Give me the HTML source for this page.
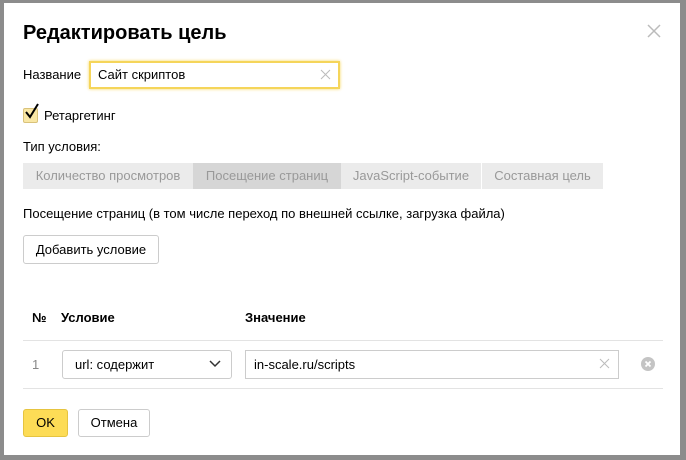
<!DOCTYPE html><html><head><style>
body{margin:0;width:686px;height:460px;background:#8c8c8c;font-family:"Liberation Sans",sans-serif;position:relative;overflow:hidden;color:#000}
.m{position:absolute;left:4px;top:3px;width:676px;height:452px;background:#fff}
.a{position:absolute;font-size:13px;white-space:nowrap}
.tab{position:absolute;top:163px;height:26px;line-height:26px;font-size:13px;color:#999;background:#ebebeb;text-align:center}
.btn{position:absolute;border:1px solid #ccc;border-radius:3px;background:#fff;font-size:13px;text-align:center;box-sizing:border-box}
.line{position:absolute;left:23px;width:640px;height:1px;background:#e3e3e3}
</style></head><body>
<div class="m"></div>
<div class="a" style="left:23px;top:22px;font-size:20px;font-weight:bold">Редактировать цель</div>
<div style="position:absolute;left:647px;top:24px;width:14px;height:14px"><svg width="14" height="14"><path d="M1 1L13 13M13 1L1 13" stroke="#bbb" stroke-width="1.5"/></svg></div>
<div class="a" style="left:23px;top:67px">Название</div>
<div style="position:absolute;left:89px;top:61px;width:251px;height:28px;box-sizing:border-box;border:2px solid #f5d55a;box-shadow:0 0 3px #f5d55a"></div>
<div class="a" style="left:98px;top:67px">Сайт скриптов</div>
<svg style="position:absolute;left:320px;top:69px" width="11" height="11"><path d="M1 1L10 10M10 1L1 10" stroke="#bbb" stroke-width="1"/></svg>
<div style="position:absolute;left:23px;top:108px;width:13px;height:13px;background:#f9e7a5;border:1px solid #d9c27a;border-radius:2px"></div>
<svg style="position:absolute;left:24px;top:102px" width="16" height="18"><path d="M2 10L6 15L14 2" stroke="#000" stroke-width="2" fill="none"/></svg>
<div class="a" style="left:44px;top:108px">Ретаргетинг</div>
<div class="a" style="left:23px;top:139px">Тип условия:</div>
<div class="tab" style="left:23px;width:170px">Количество просмотров</div>
<div class="tab" style="left:193px;width:148px;background:#d6d6d6">Посещение страниц</div>
<div class="tab" style="left:341px;width:140px;border-right:1px solid #fff">JavaScript-событие</div>
<div class="tab" style="left:482px;width:121px">Составная цель</div>
<div class="a" style="left:23px;top:206px">Посещение страниц (в том числе переход по внешней ссылке, загрузка файла)</div>
<div class="btn" style="left:23px;top:235px;width:136px;height:29px;line-height:27px">Добавить условие</div>
<div class="a" style="left:32px;top:310px;font-weight:bold">№</div>
<div class="a" style="left:61px;top:310px;font-weight:bold">Условие</div>
<div class="a" style="left:245px;top:310px;font-weight:bold">Значение</div>
<div class="line" style="top:340px"></div>
<div class="line" style="top:388px"></div>
<div class="a" style="left:32px;top:357px;color:#888">1</div>
<div class="btn" style="left:62px;top:350px;width:170px;height:29px;text-align:left;padding-left:12px;line-height:27px">url: содержит</div>
<svg style="position:absolute;left:209px;top:360px" width="12" height="8"><path d="M1 1L6 6L11 1" stroke="#333" stroke-width="1.5" fill="none"/></svg>
<div style="position:absolute;left:245px;top:350px;width:374px;height:29px;box-sizing:border-box;border:1px solid #ccc"></div>
<div class="a" style="left:254px;top:357px">in-scale.ru/scripts</div>
<svg style="position:absolute;left:599px;top:358px" width="11" height="11"><path d="M1 1L10 10M10 1L1 10" stroke="#bbb" stroke-width="1"/></svg>
<svg style="position:absolute;left:641px;top:357px" width="14" height="14"><circle cx="7" cy="7" r="7" fill="#c4c4c4"/><path d="M4.5 4.5L9.5 9.5M9.5 4.5L4.5 9.5" stroke="#fff" stroke-width="1.8"/></svg>
<div class="btn" style="left:23px;top:409px;width:45px;height:28px;line-height:26px;background:#fddc56;border-color:#e6c440">OK</div>
<div class="btn" style="left:78px;top:409px;width:72px;height:28px;line-height:26px">Отмена</div>
</body></html>
